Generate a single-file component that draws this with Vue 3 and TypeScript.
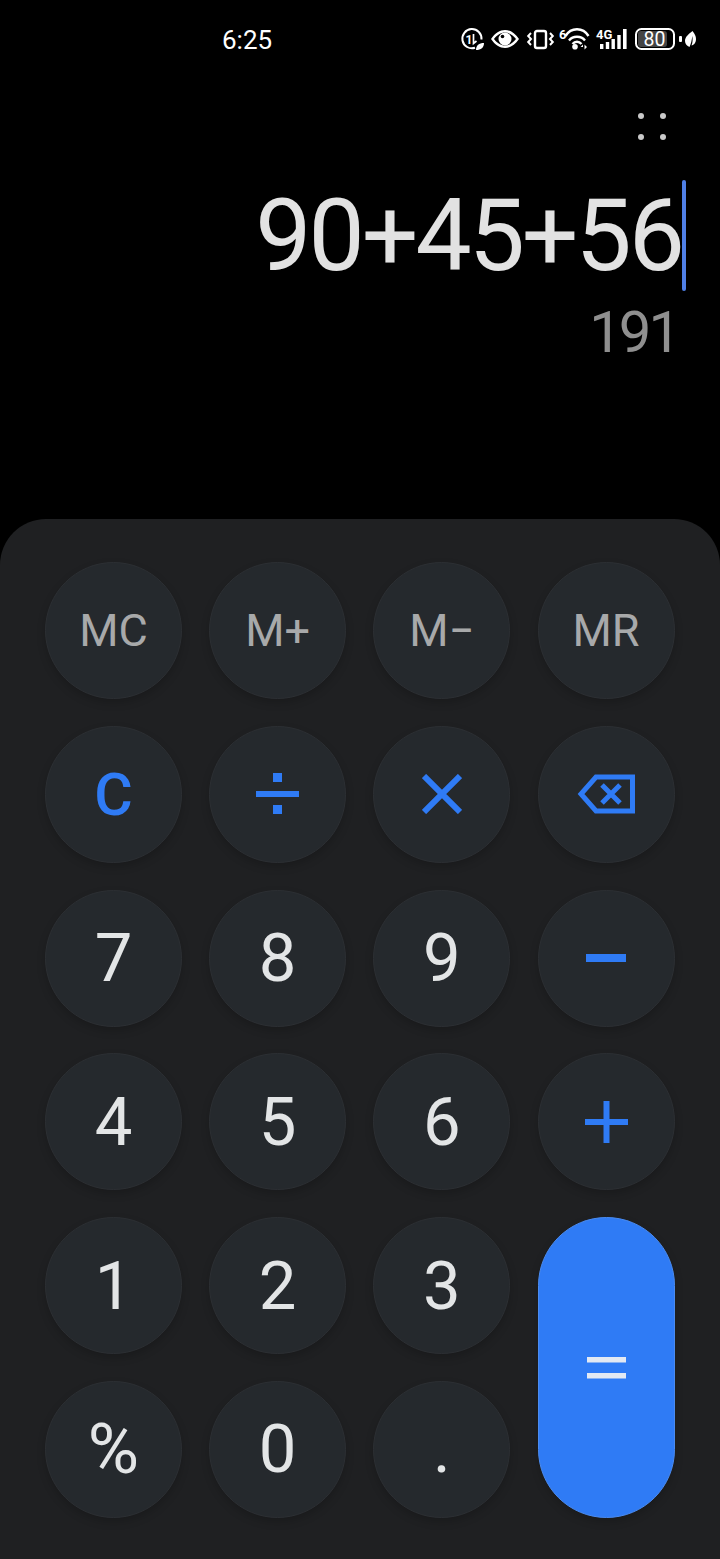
<template>
  <div class="screen">
    <header class="status-bar">
      <span class="time">6:25</span>
      <div class="status-icons">
        <svg width="23" height="22" viewBox="0 0 23 22" fill="none">
          <path d="M14 19.800A9.600 9.600 0 1 1 20.500 11.500" stroke="#fff" stroke-width="2" />
          <text x="4.500" y="15.500" class="tiny-text" font-size="12" font-weight="700">1</text>
          <path d="M12.500 6v9.500l3-2.500" stroke="#fff" stroke-width="1.700" />
          <path d="M15 22c0-4.500 3-7 8-7 0 4.500-3 7-8 7z" fill="#fff" />
        </svg>
        <svg class="eye" width="28" height="18" viewBox="0 0 28 18">
          <path d="M0 9C4 3 9 0 14 0s10 3 14 9c-4 6-9 9-14 9S4 15 0 9zm3 0c3 4 7 6.500 11 6.500S22 13 25 9c-3-4-7-6.500-11-6.500S6 5 3 9z" fill="#fff" />
          <circle cx="14" cy="9" r="6.500" fill="#fff" />
          <circle cx="11.500" cy="6.500" r="1.800" fill="#000" />
        </svg>
        <svg width="27" height="20" viewBox="0 0 27 20" fill="none" stroke="#fff">
          <rect x="8" y="2" width="11" height="17" rx="2" stroke-width="2.400" />
          <path d="M4 4L1.200 7 4 10l-2.800 3L4 16M23 4l2.800 3L23 10l2.800 3L23 16" stroke-width="2" />
        </svg>
        <svg class="wifi" width="30" height="22" viewBox="0 0 30 22" fill="none">
          <text x="0" y="10.500" class="tiny-text" font-size="13" font-weight="700">6</text>
          <path d="M6.500 8C12 -1 24 -1 29.500 8M10 12.500c4-5 12-5 16 0M13.500 16c2.500-3 6.500-3 9 0" stroke="#fff" stroke-width="2.400" />
          <circle cx="16" cy="18.800" r="2.800" fill="#fff" />
          <path d="M24 16.500l-2.500 2.500H24zM25.500 16.500v5l2.500-2.500z" fill="#fff" />
        </svg>
        <svg width="31" height="21" viewBox="0 0 31 21">
          <text x="0" y="10" class="tiny-text" font-size="13" font-weight="700">4G</text>
          <rect x="4" y="15" width="3.400" height="5" fill="#fff" />
          <rect x="9.800" y="13" width="3.400" height="7" fill="#fff" />
          <rect x="15.500" y="10" width="3.400" height="10" fill="#fff" />
          <rect x="21.300" y="6" width="3.400" height="14" fill="#fff" />
          <rect x="27" y="0" width="3.600" height="20" fill="#fff" />
        </svg>
        <svg class="battery" width="47" height="22" viewBox="0 0 47 22">
          <rect x="1" y="1" width="38" height="20" rx="5.500" fill="none" stroke="#fff" stroke-width="2" />
          <rect x="3" y="3" width="29" height="16" rx="3" fill="#444" />
          <rect x="44" y="8" width="3" height="6" rx="1" fill="#fff" />
          <text x="19.500" y="17.500" text-anchor="middle" class="tiny-text" font-size="19.500">80</text>
        </svg>
        <svg class="leaf" width="11" height="16" viewBox="0 0 11 16">
          <path d="M7.500 0C10 3 11 5.500 11 8c0 3.500-2 6-4.500 6.500C7.800 11.500 7.800 8 7.300 5 6.800 9 6 13 4.500 16 2 15 0 13 0 10 0 6 3.500 3 7.500 0z" fill="#fff" />
        </svg>
      </div>
    </header>

    <section class="display">
      <div class="more-dots">
        <i v-for="n in 4" :key="n"></i>
      </div>
      <div class="expression">
        <span>90+45+56</span><span class="caret"></span>
      </div>
      <div class="result">191</div>
    </section>

    <main class="pad">
      <button
        v-for="key in keys"
        :key="key.label"
        class="key"
        :class="key.kind"
        :aria-label="key.label"
      >
        <template v-if="!key.icon">{{ key.label }}</template>
        <svg v-else-if="key.icon === 'div'" width="43" height="42" viewBox="0 0 43 42" fill="#2f7bf5">
          <rect x="0" y="18" width="43" height="6" />
          <rect x="17" y="0" width="9" height="9" />
          <rect x="17" y="32" width="9" height="9" />
        </svg>
        <svg v-else-if="key.icon === 'times'" width="40" height="40" viewBox="0 0 40 40" fill="none" stroke="#2f7bf5" stroke-width="6">
          <path d="M2 2l36 36M38 2L2 38" />
        </svg>
        <svg v-else-if="key.icon === 'back'" width="58" height="40" viewBox="0 0 58 40" fill="none" stroke="#2f7bf5">
          <path d="M55.500 3H19L4 20l15 17h36.500z" stroke-width="5" />
          <path d="M25 11l18 18M43 11L25 29" stroke-width="5" />
        </svg>
        <svg v-else-if="key.icon === 'minus'" width="40" height="8" viewBox="0 0 40 8" fill="#2f7bf5">
          <rect width="40" height="8" />
        </svg>
        <svg v-else-if="key.icon === 'plus'" width="43" height="42" viewBox="0 0 43 42" fill="#2f7bf5">
          <rect x="0" y="18" width="43" height="6" />
          <rect x="18.500" y="0" width="6" height="42" />
        </svg>
        <svg v-else-if="key.icon === 'equals'" width="39" height="22" viewBox="0 0 39 22" fill="#e3e9f3">
          <rect width="39" height="5.500" />
          <rect y="16" width="39" height="5.500" />
        </svg>
      </button>
    </main>
  </div>
</template>

<script setup lang="ts">
type Key = {
  label: string;
  kind?: string;
  icon?: string;
};

const keys: Key[] = [
  { label: "MC", kind: "memory" },
  { label: "M+", kind: "memory" },
  { label: "M−", kind: "memory" },
  { label: "MR", kind: "memory" },
  { label: "C", kind: "clear" },
  { label: "÷", icon: "div" },
  { label: "×", icon: "times" },
  { label: "delete", icon: "back" },
  { label: "7" },
  { label: "8" },
  { label: "9" },
  { label: "−", icon: "minus" },
  { label: "4" },
  { label: "5" },
  { label: "6" },
  { label: "+", icon: "plus" },
  { label: "1" },
  { label: "2" },
  { label: "3" },
  { label: "=", kind: "equals", icon: "equals" },
  { label: "%", kind: "percent" },
  { label: "0" },
  { label: "." },
];
</script>

<style>
html,
body {
  margin: 0;
  background: #000;
}
</style>

<style scoped>
.screen {
  width: 720px;
  height: 1559px;
  background: #000;
  display: flex;
  flex-direction: column;
  font-family: Roboto, "Liberation Sans", sans-serif;
  overflow: hidden;
}

.status-bar {
  height: 80px;
  display: flex;
  align-items: center;
  justify-content: space-between;
  padding: 0 24px 0 222px;
  box-sizing: border-box;
  color: #fff;
}

.time {
  font-size: 26px;
  font-weight: 400;
}

.status-icons {
  display: flex;
  align-items: center;
  gap: 7px;
  margin-bottom: 2px;
}

.status-icons svg {
  overflow: visible;
}

.tiny-text {
  fill: #fff;
  font-family: Roboto, sans-serif;
}

.eye {
  margin-right: 1px;
}

.wifi {
  margin-left: -2px;
}

.battery {
  margin-left: 1px;
}

.leaf {
  margin-left: -4px;
}

.display {
  height: 439px;
  display: flex;
  flex-direction: column;
  align-items: flex-end;
  padding: 33px 38px 0 0;
  box-sizing: border-box;
}

.more-dots {
  width: 28px;
  height: 27px;
  margin-right: 16px;
  display: grid;
  grid-template-columns: 6px 6px;
  grid-template-rows: 6px 6px;
  justify-content: space-between;
  align-content: space-between;
}

.more-dots i {
  border-radius: 50%;
  background: #c9c9c9;
}

.expression {
  position: relative;
  margin-top: 40px;
  font-size: 100px;
  line-height: 111px;
  font-weight: 400;
  letter-spacing: -3px;
  color: #e2e2e2;
  white-space: nowrap;
}

.caret {
  position: absolute;
  right: -4px;
  top: 0;
  width: 4px;
  height: 111px;
  border-radius: 2px;
  background: #4f7fe6;
}

.result {
  margin: 8px 4px 0 0;
  font-size: 58px;
  line-height: 66px;
  font-weight: 400;
  letter-spacing: -3px;
  color: #8f8f8f;
}

.pad {
  flex: 1;
  display: grid;
  grid-template-columns: repeat(4, 137px);
  grid-auto-rows: 137px;
  column-gap: 27.200px;
  row-gap: 26.800px;
  padding: 43px 45px 0;
  border-radius: 46px 46px 0 0;
  background: #1f2022;
}

.key {
  height: 100%;
  padding: 0;
  border: 1px solid #2c2f33;
  border-radius: 50%;
  background: #25292d;
  box-shadow: 0 4px 8px rgba(0, 0, 0, 0.18);
  color: #e3e5e6;
  font-family: inherit;
  font-size: 67px;
  font-weight: 400;
  display: flex;
  align-items: center;
  justify-content: center;
}

.memory {
  color: #a8a9aa;
  font-size: 45px;
}

.clear {
  color: #2f7bf5;
  font-size: 59px;
  font-weight: 500;
}

.percent {
  font-size: 70px;
}

.equals {
  grid-column: 4;
  grid-row: 5 / span 2;
  border-radius: 69px;
  background: #2f7bf5;
  border-color: #4a8bf0;
}
</style>
